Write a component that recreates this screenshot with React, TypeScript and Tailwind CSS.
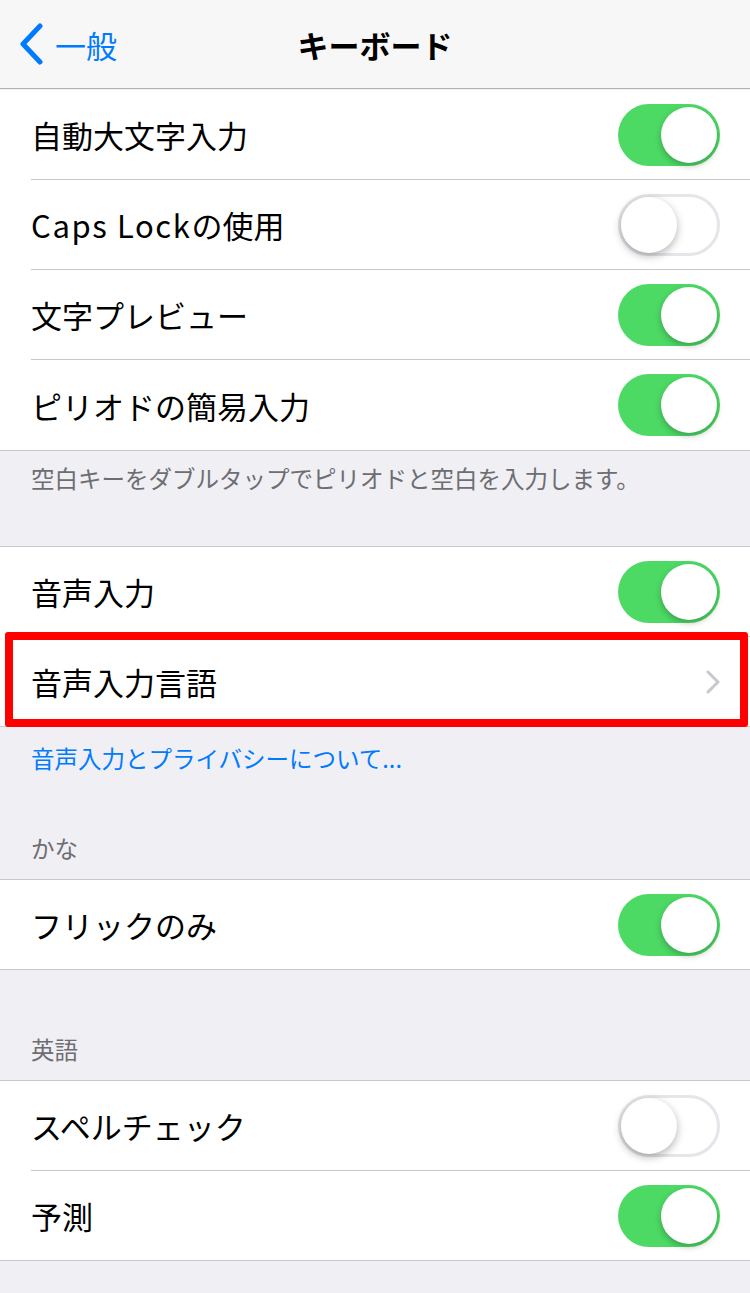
import React from 'react';

const font = { fontFamily: '"Noto Sans CJK JP", "Noto Sans", sans-serif' };

const Toggle: React.FC<{ on: boolean }> = ({ on }) =>
  on ? (
    <div className="relative w-[102px] h-[62px] rounded-full bg-[#4cd964]">
      <div className="absolute right-[3px] top-[3px] w-[56px] h-[56px] rounded-full bg-white shadow-[0_3px_6px_rgba(0,0,0,0.25)]" />
    </div>
  ) : (
    <div className="relative w-[102px] h-[62px] rounded-full bg-white border-[3px] border-[#e5e5ea]">
      <div className="absolute left-[0px] top-[0px] w-[56px] h-[56px] rounded-full bg-white shadow-[0_3px_8px_rgba(0,0,0,0.3)]" />
    </div>
  );

type RowProps = {
  label: React.ReactNode;
  on?: boolean;
  chevron?: boolean;
  last?: boolean;
  fullLine?: boolean;
  highlight?: boolean;
};

const Row: React.FC<RowProps> = ({ label, on, chevron, last, fullLine, highlight }) => (
  <div className={`relative h-[90px] bg-white ${fullLine ? 'border-b border-[#c8c7cc]' : ''}`}>
    <div className="h-full pl-[31px]">
      <div className={`h-full flex items-center pr-[30px] ${last ? '' : 'border-b border-[#c8c7cc]'}`}>
        <span className="flex-1 text-[31px] text-black leading-none">{label}</span>
        {chevron ? (
          <svg width="14" height="24" viewBox="0 0 14 24">
            <path d="M2 2 L12 12 L2 22" fill="none" stroke="#c7c7cc" strokeWidth="3" strokeLinecap="round" strokeLinejoin="round" />
          </svg>
        ) : (
          <Toggle on={!!on} />
        )}
      </div>
    </div>
    {highlight && (
      <div className="absolute left-[5px] right-[2px] top-[-5px] bottom-[-1px] border-[8px] border-[#ff0000] rounded-[3px]" />
    )}
  </div>
);

export default function App() {
  return (
    <div className="w-[750px] h-[1293px] bg-[#efeff4] overflow-hidden" style={font}>
      {/* Nav bar */}
      <div className="relative h-[88px] bg-[#f7f7f7] flex items-center justify-center">
        <div className="absolute left-[18px] top-0 h-full flex items-center gap-[11px]">
          <svg width="26" height="42" viewBox="0 0 26 42">
            <path d="M22 3 L5 21 L22 39" fill="none" stroke="#007aff" strokeWidth="5" strokeLinecap="round" strokeLinejoin="round" />
          </svg>
          <span className="text-[31px] text-[#007aff] leading-none">一般</span>
        </div>
        <span className="text-[31px] font-bold text-black leading-none">キーボード</span>
      </div>

      <div className="border-t border-[#b2b2b2]">
        <div className="border-b border-[#c8c7cc] bg-white mt-[1px]">
          <Row label="自動大文字入力" on />
          <Row
            label={
              <>
                <span className="tracking-[1.6px]">Caps Lock</span>の使用
              </>
            }
            on={false}
          />
          <Row label="文字プレビュー" on />
          <Row label="ピリオドの簡易入力" on last />
        </div>
      </div>

      <div className="h-[95px] px-[31px] pt-[16px] text-[23.5px] text-[#6d6d72] leading-none">
        空白キーをダブルタップでピリオドと空白を入力します。
      </div>

      <div className="border-t border-[#c8c7cc]">
        <Row label="音声入力" on />
        <Row label="音声入力言語" chevron last fullLine highlight />
      </div>

      <div className="h-[152px] px-[31px] pt-[20px] text-[23.5px] text-[#007aff] leading-none">
        音声入力とプライバシーについて...
        <div className="mt-[66px] text-[#6d6d72]">かな</div>
      </div>

      <div className="border-t border-[#c8c7cc]">
        <Row label="フリックのみ" on last fullLine />
      </div>

      <div className="h-[110px] px-[31px] pt-[68px] text-[23.5px] text-[#6d6d72] leading-none">英語</div>

      <div className="border-t border-[#c8c7cc]">
        <Row label="スペルチェック" on={false} />
        <Row label="予測" on last fullLine />
      </div>
    </div>
  );
}
